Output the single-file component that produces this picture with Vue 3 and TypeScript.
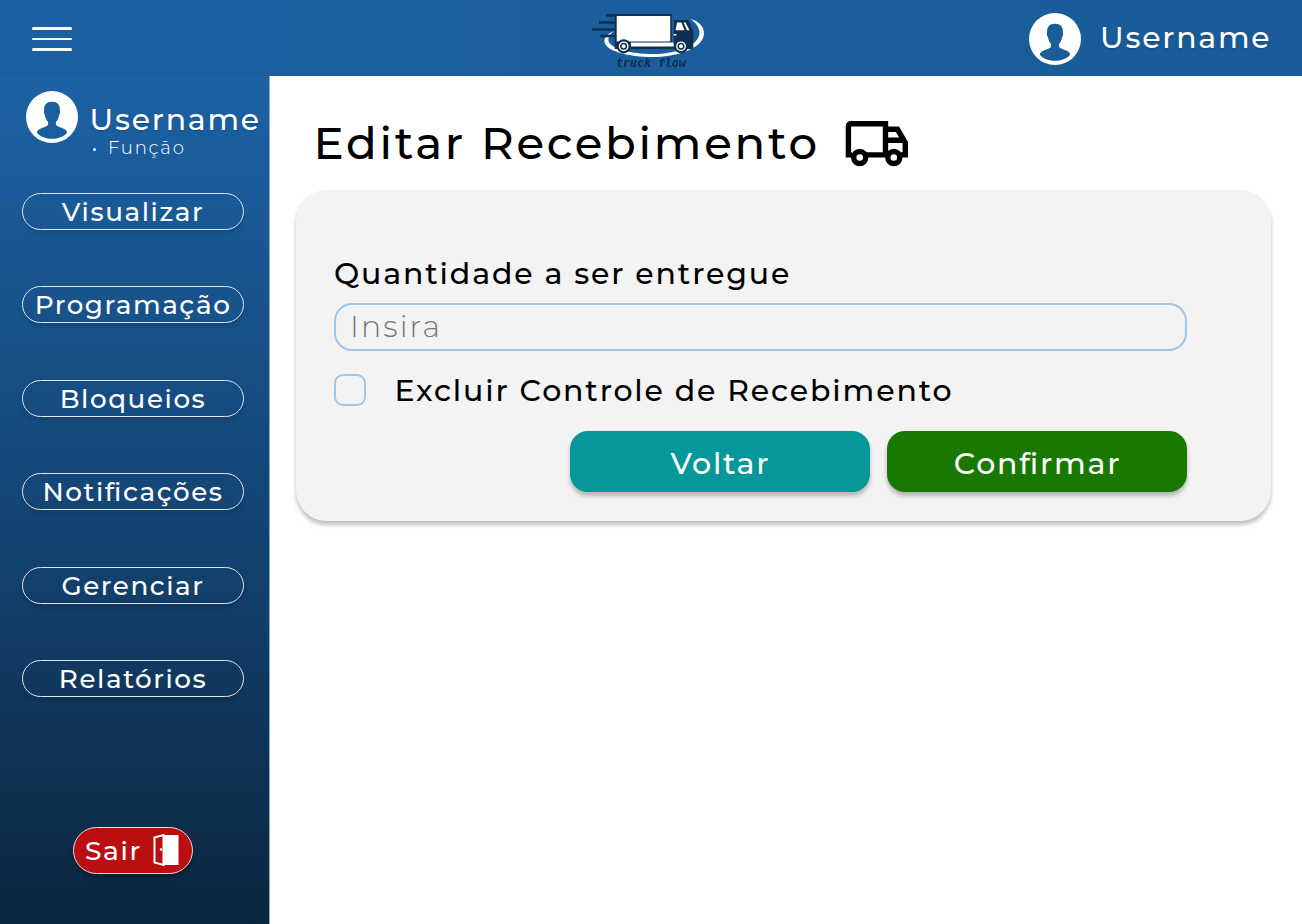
<script setup lang="ts">
const navItems: string[] = [
  'Visualizar',
  'Programação',
  'Bloqueios',
  'Notificações',
  'Gerenciar',
  'Relatórios',
]

const personShape =
  'M26 10.700c5.500 0 8.200 3.500 7.900 8.300l.2 3-1.200 2.800c-.5 3-1.500 4.700-3 6.200v2.500c1.500 3.500 10.800 3 11.300 8.200C37.500 46 32 47.700 26 47.700S14.500 46 10.800 41.700C11.300 36.500 20.600 37 22.100 33.500V31c-1.500-1.500-2.500-3.200-3-6.200l-1.200-2.800.2-3c-.3-4.800 2.400-8.300 7.900-8.300Z'
</script>

<template>
  <div class="app">
    <header class="topbar">
      <button class="menu" aria-label="Menu">
        <span></span><span></span><span></span>
      </button>
      <svg class="logo" viewBox="0 0 120 64" aria-label="Truck Flow">
        <path d="M24 23C17 26 14 30 14.500 34C16 43 38 49 63 49C83 49 114 42 114 25C114 19 109 13 100.500 11C107 16 109.500 20 109.500 25C109 38 86 46 63 46C40 46 20 40 18.500 33C18 29 20 26 24 23Z" fill="#fff" />
        <g fill="#0d2f50">
          <path d="M16 6.300h66v2.500H16zM9 13.300h18v2.500H9zM2.300 20.200h24v2.500H2.300zM10.300 26.800h16v2.500H10.300z" />
          <path d="M24.700 6.300H81.700V34H84V12H98.300l5 11v18H24.700z" />
        </g>
        <path d="M26.700 8h53.500v25.500H26.700zM40.700 34.500h43v4H40.700z" fill="#fff" />
        <path d="M87 14.500h4.500l3 7.700h-9zM93.500 14.500h2l4 7.700h-2.500zM84 26h2.500v1.500h-2.500z" fill="#fff" />
        <g fill="#fff" stroke="#0d2f50" stroke-width="2.200">
          <circle cx="33.700" cy="38.300" r="6" /><circle cx="91" cy="38.300" r="6" />
        </g>
        <g fill="none" stroke="#0d2f50" stroke-width="1.500">
          <circle cx="33.700" cy="38.300" r="2.800" /><circle cx="91" cy="38.300" r="2.800" />
        </g>
        <text class="logo-text" x="25.500" y="58.700" textLength="70" lengthAdjust="spacingAndGlyphs">truck flow</text>
      </svg>
      <div class="account">
        <svg class="avatar" viewBox="0 0 52 52">
          <circle cx="26" cy="26" r="26" fill="#fff" />
          <path :d="personShape" fill="#195d9b" />
        </svg>
        <span class="name">Username</span>
      </div>
    </header>

    <div class="body">
      <aside class="sidebar">
        <div class="profile">
          <svg class="avatar" viewBox="0 0 52 52">
            <circle cx="26" cy="26" r="26" fill="#fff" />
            <path :d="personShape" fill="#1a5fa0" />
          </svg>
          <div class="who">
            <span class="name">Username</span>
            <div class="role"><i></i><span>Função</span></div>
          </div>
        </div>
        <nav class="nav">
          <button v-for="item in navItems" :key="item" class="nav-item">{{ item }}</button>
        </nav>
        <button class="exit">
          <span>Sair</span>
          <svg viewBox="0 0 26 34">
            <path d="M1.500 4.500 10.500 2v30L1.500 29.500Z" fill="none" stroke="#fff" stroke-width="2" />
            <path d="M11 2h14.500v30H11z" fill="#fff" />
            <circle cx="8" cy="16.500" r="1.300" fill="#fff" />
          </svg>
        </button>
      </aside>

      <main class="content">
        <div class="heading">
          <h1>Editar Recebimento</h1>
          <svg class="truck" viewBox="0 0 64 48">
            <g fill="none" stroke="#000" stroke-width="5.400">
              <path d="M7 34.900H3.400V6.600Q3.400 3.800 6.200 3.800H40.500V34.900M19 34.900H44M40.500 9.300H52.500L60.300 22.800V34.900H54M40.500 20.200H59" />
              <circle cx="14.700" cy="37.500" r="6" /><circle cx="48.800" cy="37.500" r="6" />
            </g>
          </svg>
        </div>
        <section class="card">
          <label class="field-label" for="amount">Quantidade a ser entregue</label>
          <input id="amount" class="field" type="text" placeholder="Insira" />
          <label class="check">
            <input class="box" type="checkbox" />
            <span>Excluir Controle de Recebimento</span>
          </label>
          <div class="actions">
            <button class="action back">Voltar</button>
            <button class="action confirm">Confirmar</button>
          </div>
        </section>
      </main>
    </div>
  </div>
</template>

<style>
body { background: #fff; }
</style>

<style scoped>
* { box-sizing: border-box; }
.app {
  width: 1302px;
  height: 924px;
  overflow: hidden;
  font-family: Montserrat, Inter, sans-serif;
  font-weight: 500;
  white-space: nowrap;
}
button, h1, .name { letter-spacing: 0.06em; }
.card, .field { letter-spacing: 0.062em; }
button {
  margin: 0;
  padding: 0;
  border: 0;
  background: none;
  color: #fff;
  font: inherit;
  font-feature-settings: "liga" 1;
}
.topbar {
  display: grid;
  grid-template-columns: 590px 120px 1fr;
  height: 76px;
  background: linear-gradient(90deg, #1b60a1, #185b98);
}
.menu {
  display: flex;
  flex-direction: column;
  gap: 8px;
  width: 40px;
  height: 26px;
  margin: 27px 0 0 32px;
}
.menu span { width: 40px; height: 2.600px; border-radius: 2px; background: #fff; }
.logo { width: 120px; height: 64px; margin-top: 8px; }
.logo-text {
  fill: #0d2f50;
  font: italic bold 12px "DejaVu Sans Mono", monospace;
  letter-spacing: 0;
  text-shadow: -0.500px 0 #159db5, 0.700px 0.500px #35208a;
}
.account { display: flex; margin: 13px 0 0 319px; }
.avatar { flex: none; width: 52px; height: 52px; }
.name { font-size: 29.900px; line-height: 40px; color: #fff; text-shadow: 0 1px 2px #0003; }
.account .name { margin: 5px 0 0 19px; }
.body { display: flex; height: 848px; }
.sidebar {
  display: flex;
  flex-direction: column;
  flex: none;
  width: 270px;
  background: linear-gradient(#1c62a5 0%, #134270 56%, #0b263f 100%);
  border-right: 1px solid #8fabc5;
}
.profile { display: flex; height: 117px; padding: 14.500px 0 0 25.500px; color: #fff; }
.who { margin: 9.500px 0 0 12px; }
.who .name { display: block; }
.role { display: flex; align-items: center; height: 20px; margin-top: -2px; font-size: 18px; font-weight: 300; letter-spacing: 0.1em; }
.role i { width: 3px; height: 3px; margin: 3px 12px 0 3.500px; border-radius: 50%; background: #fff; }
.nav { display: flex; flex-direction: column; gap: 56.400px; margin-left: 22px; }
.nav-item {
  width: 222px;
  height: 37px;
  border: 1px solid #dce6ef;
  border-radius: 19px;
  box-shadow: 0 4px 4px #0000001c;
  font-size: 26.200px;
  line-height: 36px;
}
.exit {
  display: flex;
  align-items: center;
  justify-content: space-between;
  width: 120px;
  height: 47px;
  margin: 130px 0 0 73px;
  padding: 0 13px 0 11px;
  border: 1px solid #f1d7d7;
  border-radius: 24px;
  background: #ba0e10;
  box-shadow: 0 4px 4px #0004;
  font-size: 26.500px;
}
.exit svg { width: 26px; height: 34px; }
.content { flex: 1; padding: 39px 0 0 26px; }
.heading { display: flex; height: 75px; padding-left: 17.500px; }
h1 { width: 531px; margin: 0; font-size: 45.100px; font-weight: 500; line-height: 55px; }
.truck { width: 64px; height: 48px; margin-top: 4.500px; }
.card {
  width: 974.500px;
  height: 331px;
  padding: 63px 84px 0 38px;
  border-radius: 31px;
  background: #f3f3f3;
  box-shadow: 0 4px 4px #00000040;
  font-size: 30px;
}
.field-label { display: block; height: 50px; line-height: 41px; }
.field {
  display: block;
  width: 852.500px;
  height: 48px;
  margin: 0;
  padding: 0 0 1px 14px;
  border: 2px solid #9fc5e8;
  border-radius: 18px;
  outline: 0;
  background: none;
  font: inherit;
  font-weight: 300;
  letter-spacing: 0.07em;
}
.field::placeholder { color: #777; opacity: 1; }
.check { display: flex; align-items: center; height: 32px; margin-top: 23px; }
.box {
  appearance: none;
  width: 32px;
  height: 32px;
  margin: 0 28.500px 0 0;
  border: 2px solid #9fc5e8;
  border-radius: 9px;
}
.actions { display: flex; justify-content: flex-end; gap: 17px; margin-top: 25px; }
.action { width: 300px; height: 61px; padding-left: 2px; border-radius: 18px; box-shadow: 0 4px 4px #00000040; line-height: 65px; }
.back { background: #059799; }
.confirm { background: #187900; }
</style>
